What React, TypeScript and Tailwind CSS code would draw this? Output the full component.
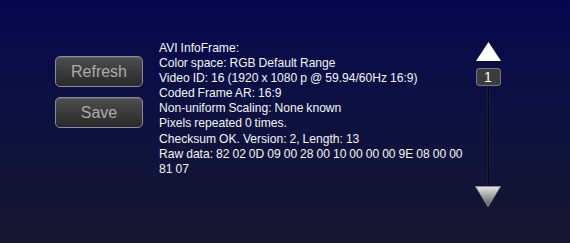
import React from "react";

const lines = [
  "AVI InfoFrame:",
  "Color space: RGB Default Range",
  "Video ID: 16 (1920 x 1080 p @ 59.94/60Hz 16:9)",
  "Coded Frame AR: 16:9",
  "Non-uniform Scaling: None known",
  "Pixels repeated 0 times.",
  "Checksum OK. Version: 2, Length: 13",
  "Raw data: 82 02 0D 09 00 28 00 10 00 00 00 9E 08 00 00",
  "81 07",
];

function Btn({ label }: { label: string }) {
  return (
    <button className="h-[31px] w-[88px] rounded-[5px] border border-[#8a8a98] bg-gradient-to-b from-[#4e4e4e] to-[#2a2a2a] text-[16px] leading-none text-[#ababab] shadow-[inset_0_1px_0_rgba(255,255,255,0.12)]">
      {label}
    </button>
  );
}

export default function App() {
  return (
    <div
      className="flex h-[243px] w-[570px] overflow-hidden bg-gradient-to-b from-[#07064f] to-[#17162f]"
      style={{ fontFamily: '"Liberation Sans", Arial, sans-serif' }}
    >
      <div className="ml-[55px] mt-[56px] flex w-[88px] shrink-0 flex-col gap-[10px]">
        <Btn label="Refresh" />
        <Btn label="Save" />
      </div>
      <div className="ml-[16px] mt-[41px] w-[292px] shrink-0 whitespace-nowrap text-[12.1px] leading-[15.1px] text-[#f4f4f4]">
        {lines.map((l) => (
          <div key={l} className="[word-spacing:-0.4px]">{l}</div>
        ))}
      </div>
      <div className="ml-[24px] mt-[42px] flex w-[26px] shrink-0 flex-col items-center">
        <svg width="25" height="19" viewBox="0 0 25 19" className="shrink-0">
          <polygon points="12.5,0 25,19 0,19" fill="#ffffff" />
        </svg>
        <div className="mt-[7px] flex h-[18px] w-[25px] shrink-0 items-center justify-center rounded-[3px] border border-[#767676] bg-[#3c3c3c] text-[14px] leading-none text-white">
          1
        </div>
        <div className="h-[100px] w-[3px] shrink-0 border-x border-[#1c1c34] bg-[#06061a]" />
        <svg width="26" height="21" viewBox="0 0 26 21" className="shrink-0">
          <defs>
            <linearGradient id="dg" x1="0" y1="0" x2="0" y2="1">
              <stop offset="0" stopColor="#e8e8e8" />
              <stop offset="1" stopColor="#555555" />
            </linearGradient>
          </defs>
          <polygon points="0.5,0.5 25.5,0.5 13,20.5" fill="url(#dg)" stroke="#8e8e8e" strokeWidth="1" />
        </svg>
      </div>
    </div>
  );
}
